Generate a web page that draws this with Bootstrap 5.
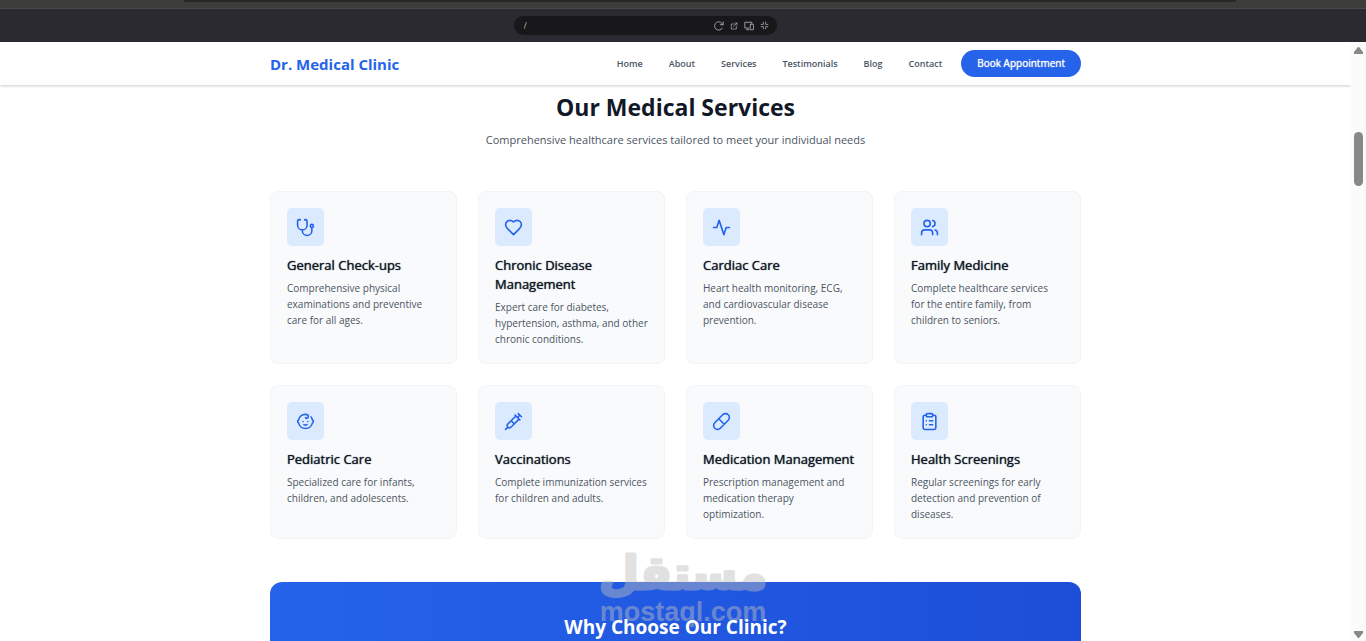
<!DOCTYPE html>
<html lang="en">
<head>
<meta charset="utf-8">
<meta name="viewport" content="width=device-width, initial-scale=1">
<title>Dr. Medical Clinic</title>
<link href="https://cdn.jsdelivr.net/npm/bootstrap@5.3.0/dist/css/bootstrap.min.css" rel="stylesheet">
<style>
  :root { --brand: #2563eb; --brand-dark: #1d4ed8; --ink: #111827; --muted: #4b5563; }
  body { font-family: "Open Sans", "Noto Sans", sans-serif; color: var(--ink); background: #fff; }
  a { text-decoration: none; }
  svg.line { fill: none; stroke: currentColor; stroke-width: 2; stroke-linecap: round; stroke-linejoin: round; }

  /* browser frame */
  .tab-strip { background: #3c3c3b; height: 9px; border-bottom: 1px solid #4a4a4a; }
  .tab-field { background: #262626; height: 2px; width: 77%; margin-left: 4%; border-radius: 0 0 4px 4px; }
  .tool-strip { background: #2b2a30; height: 33px; padding-right: 76px; }
  .url-pill { background: #18181b; width: 263px; height: 19px; padding: 0 8px 0 10px; gap: 6px; }
  .url-pill input { background: none; border: 0; outline: 0; color: #b4b4bb; font-size: 9px; min-width: 0; line-height: 12px; }
  .url-pill button { background: none; border: 0; padding: 0; color: #b4b4bb; line-height: 0; }
  .url-pill svg { width: 10px; height: 10px; }
  .url-pill .open svg { width: 8px; height: 8px; }
  .url-pill .exit svg { width: 9px; height: 9px; }

  .wrap { max-width: 811px; }

  /* clinic header */
  .site-head { height: 43px; box-shadow: 0 1px 3px rgba(0,0,0,.2); }
  .brand { color: var(--brand); font-size: 15px; font-weight: 700; line-height: 24px; }
  .menu { gap: 26px; margin-right: 19px; }
  .menu a { color: #4b5563; font-size: 9px; font-weight: 600; line-height: 14px; }
  .btn-book { background: var(--brand); color: #fff; font-size: 10px; font-weight: 500; line-height: 15px; padding: 6px 16px; border: 0; text-shadow: 0 0 1px #fff; }

  /* services */
  .services { padding-top: 6px; }
  .services h2 { font-size: 23px; font-weight: 700; line-height: 32px; margin-bottom: 8px; }
  .services .intro { font-size: 11px; line-height: 18px; color: var(--muted); margin-bottom: 42px; }
  .svc-grid { --bs-gutter-x: 21px; --bs-gutter-y: 21px; }
  .svc { background: #f9fafb; border: 1px solid #f3f4f6; border-radius: 8px; padding: 16px; }
  .svc-icon { width: 37px; height: 38px; border-radius: 5px; background: #dbeafe; color: var(--brand); margin-bottom: 10px; }
  .svc-icon svg { width: 19px; height: 19px; }
  .svc h3 { font-size: 13px; font-weight: 500; line-height: 19px; margin-bottom: 5px; text-shadow: 0 0 1px var(--ink); }
  .svc p { font-size: 10px; line-height: 16px; color: var(--muted); margin: 0; }

  /* call-out */
  .why { background: linear-gradient(90deg, var(--brand), var(--brand-dark)); border-radius: 12px; margin-top: 43px; padding: 31px 20px 200px; color: #fff; }
  .why h2 { font-size: 19px; font-weight: 700; line-height: 28px; margin: 0; position: relative; z-index: 2; }

  /* watermark over the page */
  .stamp { left: 50%; bottom: 0; transform: translateX(-50%); opacity: .45; color: #bebebe; z-index: 1; pointer-events: none; }
  .stamp svg { display: block; width: 174px; height: 96px; overflow: visible; }

  /* scrollbar */
  .scroll-rail { width: 15px; background: #fbfbfc; padding: 5px 0 3px; color: #888; }
  .scroll-thumb { width: 9px; height: 54px; border-radius: 5px; background: #888; margin-top: 78px; }
</style>
</head>
<body class="vh-100 d-flex flex-column overflow-hidden">
  <div class="tab-strip d-flex justify-content-center flex-shrink-0"><div class="tab-field"></div></div>
  <div class="tool-strip d-flex justify-content-center align-items-center flex-shrink-0">
    <div class="url-pill d-flex align-items-center rounded-pill">
      <input type="text" class="flex-grow-1 p-0" value="/" aria-label="Address">
      <button type="button" aria-label="Reload"><svg class="line" viewBox="0 0 24 24"><path d="M20 17a10 10 0 1 1 1-8M22 2v7h-7"/></svg></button>
      <button type="button" class="open" aria-label="Open in new tab"><svg class="line" viewBox="0 0 24 24"><path d="M12 6H4v15h15v-8M15 3h6v6M21 3l-10 10"/></svg></button>
      <button type="button" aria-label="Devices"><svg class="line" viewBox="0 0 24 24"><path d="M12 17H2V3h17v3M6 21h6"/><rect x="15" y="8" width="8" height="13" rx="1"/></svg></button>
      <button type="button" class="exit" aria-label="Exit full screen"><svg class="line" viewBox="0 0 24 24"><path d="M9 3v6H3M15 3v6h6M9 21v-6H3M15 21v-6h6"/></svg></button>
    </div>
  </div>

  <div class="d-flex flex-grow-1 overflow-hidden position-relative">
    <div class="flex-grow-1 overflow-hidden position-relative">
      <header class="site-head bg-white">
        <div class="wrap mx-auto h-100 d-flex align-items-center">
          <a class="brand me-auto" href="#">Dr. Medical Clinic</a>
          <nav class="menu d-flex">
            <a href="#">Home</a><a href="#">About</a><a href="#">Services</a><a href="#">Testimonials</a><a href="#">Blog</a><a href="#">Contact</a>
          </nav>
          <button type="button" class="btn btn-book rounded-pill">Book Appointment</button>
        </div>
      </header>

      <main class="wrap mx-auto">
        <section class="services">
          <h2 class="text-center">Our Medical Services</h2>
          <p class="intro text-center">Comprehensive healthcare services tailored to meet your individual needs</p>
          <div class="row row-cols-4 svc-grid">
            <div class="col"><article class="svc h-100">
              <div class="svc-icon d-flex align-items-center justify-content-center"><svg class="line" viewBox="0 0 24 24"><path d="M4.800 2.300A.3.3 0 1 0 5 2H4a2 2 0 0 0-2 2v5a6 6 0 0 0 12 0V4a2 2 0 0 0-2-2h-1a.2.2 0 1 0 .3.3M8 15v1a6 6 0 0 0 12 0v-4"/><circle cx="20" cy="10" r="2"/></svg></div>
              <h3>General Check-ups</h3><p>Comprehensive physical examinations and preventive care for all ages.</p>
            </article></div>
            <div class="col"><article class="svc h-100">
              <div class="svc-icon d-flex align-items-center justify-content-center"><svg class="line" viewBox="0 0 24 24"><path d="M19 14c1.49-1.46 3-3.21 3-5.5A5.5 5.5 0 0 0 16.5 3c-1.76 0-3 .5-4.5 2-1.5-1.5-2.74-2-4.5-2A5.5 5.5 0 0 0 2 8.5c0 2.3 1.5 4.05 3 5.5l7 7Z"/></svg></div>
              <h3>Chronic Disease Management</h3><p>Expert care for diabetes, hypertension, asthma, and other chronic conditions.</p>
            </article></div>
            <div class="col"><article class="svc h-100">
              <div class="svc-icon d-flex align-items-center justify-content-center"><svg class="line" viewBox="0 0 24 24"><path d="M22 12h-4l-3 9L9 3l-3 9H2"/></svg></div>
              <h3>Cardiac Care</h3><p>Heart health monitoring, ECG, and cardiovascular disease prevention.</p>
            </article></div>
            <div class="col"><article class="svc h-100">
              <div class="svc-icon d-flex align-items-center justify-content-center"><svg class="line" viewBox="0 0 24 24"><path d="M16 21v-2a4 4 0 0 0-4-4H6a4 4 0 0 0-4 4v2M22 21v-2a4 4 0 0 0-3-3.87M16 3.13a4 4 0 0 1 0 7.75"/><circle cx="9" cy="7" r="4"/></svg></div>
              <h3>Family Medicine</h3><p>Complete healthcare services for&nbsp;the entire family, from children to seniors.</p>
            </article></div>
            <div class="col"><article class="svc h-100">
              <div class="svc-icon d-flex align-items-center justify-content-center"><svg class="line" viewBox="0 0 24 24"><path d="M9 12h.01M15 12h.01M10 16c.5.3 1.2.5 2 .5s1.5-.2 2-.5M19 6.3a9 9 0 0 1 1.8 3.9 2 2 0 0 1 0 3.6 9 9 0 0 1-17.6 0 2 2 0 0 1 0-3.6A9 9 0 0 1 12 3c2 0 3.5 1.1 3.5 2.5s-.9 2.5-2 2.5c-.8 0-1.5-.4-1.5-1"/></svg></div>
              <h3>Pediatric Care</h3><p>Specialized care for infants, children, and adolescents.</p>
            </article></div>
            <div class="col"><article class="svc h-100">
              <div class="svc-icon d-flex align-items-center justify-content-center"><svg class="line" viewBox="0 0 24 24"><path d="m18 2 4 4M17 7l3-3M19 9 8.7 19.3c-1 1-2.5 1-3.4 0l-.6-.6c-1-1-1-2.5 0-3.4L15 5M9 11l4 4M5 19l-3 3M14 4l6 6"/></svg></div>
              <h3>Vaccinations</h3><p>Complete immunization services for children and adults.</p>
            </article></div>
            <div class="col"><article class="svc h-100">
              <div class="svc-icon d-flex align-items-center justify-content-center"><svg class="line" viewBox="0 0 24 24"><path d="m10.5 20.5 10-10a4.95 4.95 0 1 0-7-7l-10 10a4.95 4.95 0 1 0 7 7ZM8.500 8.500l7 7"/></svg></div>
              <h3>Medication Management</h3><p>Prescription management and medication therapy optimization.</p>
            </article></div>
            <div class="col"><article class="svc h-100">
              <div class="svc-icon d-flex align-items-center justify-content-center"><svg class="line" viewBox="0 0 24 24"><rect x="8" y="2" width="8" height="4" rx="1"/><path d="M16 4h2a2 2 0 0 1 2 2v14a2 2 0 0 1-2 2H6a2 2 0 0 1-2-2V6a2 2 0 0 1 2-2h2M12 11h4M12 16h4M8 11h.01M8 16h.01"/></svg></div>
              <h3>Health Screenings</h3><p>Regular screenings for early detection and prevention of diseases.</p>
            </article></div>
          </div>
        </section>

        <section class="why text-center"><h2>Why Choose Our Clinic?</h2></section>
      </main>
    </div>

    <div class="scroll-rail d-flex flex-column align-items-center flex-shrink-0" aria-hidden="true">
      <svg width="9" height="7" viewBox="0 0 9 7"><path d="M4 0h1l4 5v2H0V5z" fill="currentColor"/></svg>
      <div class="scroll-thumb"></div>
      <svg class="mt-auto" width="9" height="7" viewBox="0 0 9 7"><path d="M0 0h9v2L5 7H4L0 2z" fill="currentColor"/></svg>
    </div>

    <div class="stamp position-absolute">
      <svg viewBox="0 0 174 96" fill="currentColor" text-anchor="middle">
        <text x="87" y="44" font-family="DejaVu Sans" font-weight="700" font-size="46" direction="rtl" stroke="currentColor" stroke-width="3" stroke-linejoin="round">مستقل</text>
        <text x="87" y="76" font-family="Liberation Sans" font-weight="700" font-size="27">mostaql.com</text>
      </svg>
    </div>
  </div>
<script src="https://cdn.jsdelivr.net/npm/bootstrap@5.3.0/dist/js/bootstrap.bundle.min.js"></script>
</body>
</html>
